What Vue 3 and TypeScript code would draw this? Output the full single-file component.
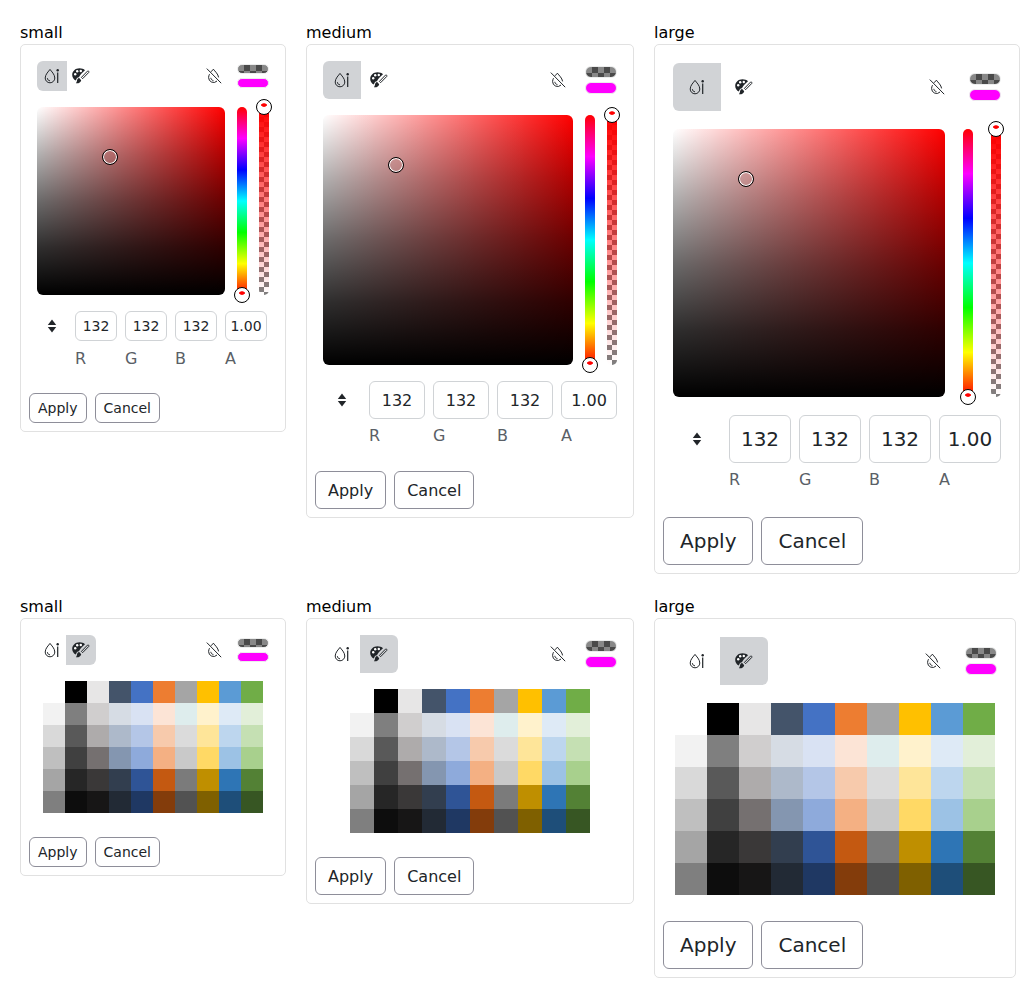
<script setup lang="ts">
type Size = 'small' | 'medium' | 'large'
type Mode = 'picker' | 'swatches'

const sizes: Size[] = ['small', 'medium', 'large']
const modes: Mode[] = ['picker', 'swatches']

const cards = modes.flatMap((mode) => sizes.map((size) => ({ mode, size })))

const channels = [
  { label: 'R', value: '132' },
  { label: 'G', value: '132' },
  { label: 'B', value: '132' },
  { label: 'A', value: '1.00' },
]

const palette = [
  '#ffffff', '#000000', '#e7e6e6', '#44546a', '#4472c4', '#ed7d31', '#a5a5a5', '#ffc000', '#5b9bd5', '#70ad47',
  '#f2f2f2', '#7f7f7f', '#d0cece', '#d6dce4', '#d9e2f3', '#fce4d6', '#deeded', '#fff2cc', '#deeaf6', '#e2efd9',
  '#d9d9d9', '#595959', '#aeabab', '#adb9ca', '#b4c6e7', '#f7caac', '#dbdbdb', '#fee599', '#bdd6ee', '#c5e0b3',
  '#bfbfbf', '#404040', '#757070', '#8496b0', '#8eaadb', '#f4b083', '#c9c9c9', '#ffd965', '#9cc2e5', '#a8d08d',
  '#a5a5a5', '#262626', '#3a3838', '#323e4f', '#2f5496', '#c45911', '#7b7b7b', '#bf8f00', '#2e75b5', '#538135',
  '#7f7f7f', '#0d0d0d', '#171616', '#222a35', '#1f3863', '#833c0b', '#525252', '#7f6000', '#1e4e79', '#375623',
]
</script>

<template>
  <div class="page">
    <section v-for="card in cards" :key="card.mode + card.size" class="demo">
      <div class="demo-title">{{ card.size }}</div>
      <div class="panel" :class="[card.size, card.mode]">
        <div class="panel-body">
          <div class="toolbar">
            <div class="tabs">
              <button class="tab" :class="{ active: card.mode === 'picker' }" type="button" aria-label="Picker">
                <svg width="16" height="16" viewBox="0 0 16 16" fill="none" stroke="#212529" stroke-width="1">
                  <path d="M6 1.4C4.6 3.4 1.2 6.4 1.2 10A4.8 4.8 0 0 0 10.8 10C10.8 6.4 7.4 3.4 6 1.4Z" />
                  <path d="M3.4 10.2C3.5 11.8 4.6 12.7 6 12.8" />
                  <path d="M13.7 4.6V15" stroke-width="1.2" />
                  <circle cx="13.7" cy="2.2" r="1.2" fill="#212529" stroke="none" />
                </svg>
              </button>
              <button class="tab" :class="{ active: card.mode === 'swatches' }" type="button" aria-label="Swatches">
                <svg width="18" height="16" viewBox="0 0 18 16">
                  <path
                    fill="#212529"
                    d="M7.5 0.3C3.4 0.3 0.2 3.2 0.2 6.9C0.2 9.4 1.7 11.5 3.9 12.5C4.2 10.9 5.2 9.4 7 9.2C7.6 8.2 8.5 6.7 9.8 5.3L13 2.2C11.7 1 9.7 0.3 7.5 0.3Z"
                  />
                  <circle cx="3.2" cy="6.2" r="1.2" fill="#fff" />
                  <circle cx="5.2" cy="3.2" r="1.2" fill="#fff" />
                  <circle cx="8.8" cy="3" r="1.2" fill="#fff" />
                  <path fill="#212529" d="M7.2 10C5.6 10.1 5.2 11.4 5 12.6C4.8 14 4.4 14.6 3.9 15.2C6 15.8 8.9 14.6 9.2 12.2Z" />
                  <path fill="none" stroke="#212529" stroke-width="1" d="M9.4 9.4L10.6 10.7L16.8 4.4C17.3 3.7 16.4 2.5 15.5 3.1Z" />
                </svg>
              </button>
            </div>
            <div class="tool-right">
              <button class="clear" type="button" aria-label="No color">
                <svg width="16" height="16" viewBox="0 0 16 16" fill="none" stroke="#212529" stroke-width="1">
                  <path d="M5 3.8L7.4 1.2C8.8 3.2 12.2 6 12.6 9.4M3.5 6.2C3 7.2 2.6 8.3 2.6 9.6A4.9 4.9 0 0 0 11 13" />
                  <path d="M4.8 9.8C4.9 11.2 6 12.4 7.4 12.5" />
                  <path d="M0.8 0.6L15.2 15.2" />
                </svg>
              </button>
              <div class="preview">
                <span class="preview-bar previous"></span>
                <span class="preview-bar current"></span>
              </div>
            </div>
          </div>

          <template v-if="card.mode === 'picker'">
            <div class="picker-row">
              <div class="area">
                <span class="handle area-handle"></span>
              </div>
              <div class="strip hue">
                <span class="handle strip-handle at-end"></span>
              </div>
              <div class="strip alpha">
                <span class="handle strip-handle at-start"></span>
              </div>
            </div>
            <div class="inputs">
              <button class="switch" type="button" aria-label="Switch format">
                <svg width="10" height="14" viewBox="0 0 10 14" fill="#212529">
                  <path d="M5 0.5L9.2 6H0.8Z" />
                  <path d="M5 13.5L0.8 8H9.2Z" />
                </svg>
              </button>
              <label v-for="channel in channels" :key="channel.label" class="channel">
                <input class="channel-input" type="text" :value="channel.value" />
                <span class="channel-label">{{ channel.label }}</span>
              </label>
            </div>
          </template>

          <div v-else class="swatch-grid">
            <span v-for="(color, i) in palette" :key="i" class="swatch" :style="{ background: color }"></span>
          </div>
        </div>
        <div class="footer">
          <button class="action" type="button">Apply</button>
          <button class="action" type="button">Cancel</button>
        </div>
      </div>
    </section>
  </div>
</template>

<style scoped>
.page {
  display: grid;
  grid-template-columns: repeat(3, max-content);
  align-items: start;
  gap: 20px;
  padding: 20px 4px 20px 20px;
  font-family: "DejaVu Sans", sans-serif;
  font-size: 16px;
  line-height: 24px;
  color: #000;
}

.demo-title {
  height: 24px;
  line-height: 25px;
}

.panel {
  --pad: 8px;
  --tab: 30px;
  --content: 232px;
  --area-w: 188px;
  --area-h: 188px;
  --strip-gap: 12px;
  --cell: 22px;
  --field: 42px;
  --text: 14px;
  --btn-pad: 8px;
  --label-lh: 27px;
  box-sizing: border-box;
  width: max-content;
  padding: 8px;
  border: 1px solid #e1e1e1;
  border-radius: 5px;
  background: #fff;
}

.panel.medium {
  --tab: 38px;
  --content: 294px;
  --area-w: 250px;
  --area-h: 250px;
  --cell: 24px;
  --field: 56px;
  --text: 16px;
  --btn-pad: 12px;
  --label-lh: 25px;
}

.panel.large {
  --pad: 10px;
  --tab: 48px;
  --content: 328px;
  --area-w: 272px;
  --area-h: 268px;
  --strip-gap: 18px;
  --cell: 32px;
  --field: 62px;
  --text: 20px;
  --btn-pad: 16px;
  --label-lh: 25px;
}

.panel.large.swatches {
  --content: 324px;
}

.panel-body {
  display: flex;
  flex-direction: column;
  gap: calc(var(--pad) + 8px);
  width: var(--content);
  padding: var(--pad) var(--pad) calc(var(--pad) + 16px);
}

.toolbar {
  display: flex;
  align-items: center;
  justify-content: space-between;
}

.tabs {
  display: flex;
}

.tab,
.switch,
.clear {
  display: flex;
  align-items: center;
  justify-content: center;
  width: var(--tab);
  height: var(--tab);
  padding: 0;
  border: 0;
  background: transparent;
}

.tab + .tab {
  margin-left: -1px;
}

.tab.active {
  background: #d1d3d6;
}

.tab:first-child {
  border-radius: 6px 0 0 6px;
}

.tab:last-child {
  border-radius: 0 6px 6px 0;
}

.tool-right {
  display: flex;
  align-items: center;
  gap: 8px;
}

.preview {
  display: flex;
  flex-direction: column;
  gap: 4px;
  width: 32px;
}

.preview-bar {
  box-sizing: border-box;
  display: block;
  height: 10px;
  border: 1px solid #eceded;
  border-radius: 5px;
}

.medium .preview-bar,
.large .preview-bar {
  height: 12px;
  border-radius: 6px;
}

.preview-bar.previous {
  background: repeating-conic-gradient(#4a4a4a 0 25%, #888 0 50%) 0 0 / 12px 12px;
}

.preview-bar.current {
  background: #ff00ff;
}

.picker-row {
  display: flex;
  gap: var(--strip-gap);
}

.area {
  position: relative;
  width: var(--area-w);
  height: var(--area-h);
  border-radius: 6px;
  background:
    linear-gradient(to bottom, rgba(0, 0, 0, 0) 0%, rgba(0, 0, 0, 0.3) 25%, rgba(0, 0, 0, 0.58) 50%, rgba(0, 0, 0, 0.82) 75%, #000 100%),
    linear-gradient(to right, #fff, rgba(255, 255, 255, 0)),
    #f00;
}

.strip {
  position: relative;
  width: 10px;
  height: var(--area-h);
}

.hue {
  border-radius: 5px;
  background: linear-gradient(to top, #f00, #ff0, #0f0, #0ff, #00f, #f0f, #f00);
}

.alpha {
  border-radius: 0 0 5px 5px;
  background:
    linear-gradient(to bottom, #f00, rgba(255, 0, 0, 0)),
    repeating-conic-gradient(#fff 0 25%, #808080 0 50%) 0 0 / 10px 10px;
}

.handle {
  position: absolute;
  box-sizing: border-box;
  width: 16px;
  height: 16px;
  border: 1px solid #000;
  border-radius: 50%;
  box-shadow: inset 0 0 0 1px #fff;
}

.area-handle {
  left: 65px;
  top: 42px;
}

.strip-handle {
  left: -3px;
  background: radial-gradient(ellipse 3.5px 2px at 50% 36%, #f00 70%, transparent 100%) #fff;
}

.at-start {
  top: -8px;
}

.at-end {
  bottom: -8px;
}

.inputs {
  display: flex;
  gap: 8px;
}

.channel {
  display: flex;
  flex-direction: column;
  gap: 4px;
}

.channel-input {
  box-sizing: border-box;
  width: var(--field);
  height: var(--tab);
  padding: 0;
  border: 1px solid #d0d3d6;
  border-radius: 6px;
  font: var(--text) "DejaVu Sans", sans-serif;
  color: #212529;
  text-align: center;
}

.channel-label {
  height: 24px;
  line-height: var(--label-lh);
  color: #5a5f66;
}

.swatch-grid {
  display: grid;
  grid-template-columns: repeat(10, var(--cell));
  grid-auto-rows: var(--cell);
  justify-content: center;
}

.footer {
  display: flex;
  gap: 8px;
}

.action {
  height: var(--tab);
  padding: 0 var(--btn-pad);
  border: 1px solid #8e8e99;
  border-radius: 6px;
  background: #fff;
  font: var(--text) "DejaVu Sans", sans-serif;
  color: #212529;
}
</style>
